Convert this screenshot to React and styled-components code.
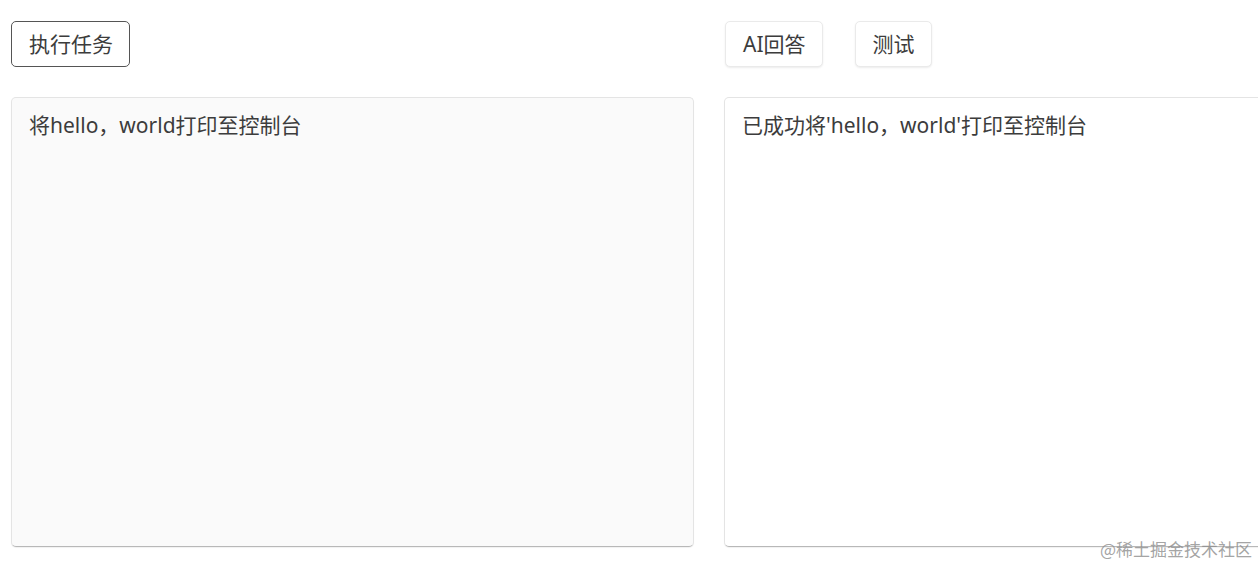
import React from 'react';
import styled, { createGlobalStyle } from 'styled-components';

const GlobalStyle = createGlobalStyle`
    html, body {
        margin: 0;
        padding: 0;
        background: #FFFFFF;
        overflow: hidden;
    }
    body {
        font-family: 'Noto Sans', 'Noto Sans CJK SC', sans-serif;
        color: #3C3C3C;
    }
`;

const App = () => {
    return (
        <Page>
            <GlobalStyle />
            <Column>
                <Toolbar>
                    <Button $outlined>执行任务</Button>
                </Toolbar>
                <Panel $tint>将hello，world打印至控制台</Panel>
            </Column>
            <Column>
                <Toolbar $gap="32px">
                    <Button>AI回答</Button>
                    <Button>测试</Button>
                </Toolbar>
                <Panel>已成功将'hello，world'打印至控制台</Panel>
            </Column>
            <Watermark>@稀土掘金技术社区</Watermark>
        </Page>
    );
};

const Page = styled.div`
    position: relative;
    display: flex;
    flex-direction: row;
    gap: 30px;
    padding: 21px 0 0 11px;
    width: 1258px;
    height: 566px;
    box-sizing: border-box;
    overflow: hidden;
`;

const Column = styled.div`
    display: flex;
    flex-direction: column;
    gap: 30px;
    width: 683px;
    flex: none;
`;

const Toolbar = styled.div`
    display: flex;
    flex-direction: row;
    align-items: center;
    gap: ${p => p.$gap || '0px'};
    height: 46px;
    padding-left: ${p => (p.$gap ? '1px' : '0')};
`;

const Button = styled.button`
    box-sizing: border-box;
    height: 46px;
    padding: 0 16px 0 17px;
    font-family: 'Noto Sans', 'Noto Sans CJK SC', sans-serif;
    font-size: 21px;
    line-height: 24px;
    color: #3C3C3C;
    background: #FFFFFF;
    border-radius: 5px;
    cursor: pointer;
    border: ${p => (p.$outlined ? '1px solid #555555' : '1px solid #EAEAEA')};
    box-shadow: ${p => (p.$outlined ? 'none' : '0 1px 2px rgba(0, 0, 0, 0.08)')};
`;

const Panel = styled.div`
    box-sizing: border-box;
    height: 450px;
    padding: 13px 17px;
    font-size: 21px;
    line-height: 28px;
    color: #3C3C3C;
    background: ${p => (p.$tint ? '#FAFAFA' : '#FFFFFF')};
    border: 1px solid #E4E4E4;
    border-bottom-color: #B8B8B8;
    border-radius: 5px;
    box-shadow: 0 1px 1px rgba(0, 0, 0, 0.06);
    white-space: pre-wrap;
`;

const Watermark = styled.div`
    position: absolute;
    right: 6px;
    bottom: 6px;
    font-family: 'Noto Sans CJK SC', sans-serif;
    font-size: 17px;
    line-height: 22px;
    color: rgba(140, 140, 140, 0.8);
`;

export default App;
